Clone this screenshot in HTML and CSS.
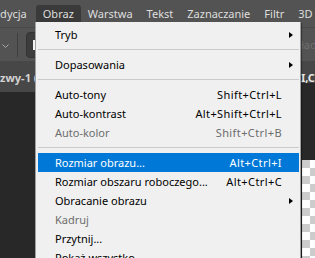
FILE: index.html
```html
<!DOCTYPE html>
<html lang="pl">
<head>
  <meta charset="UTF-8">
  <meta name="viewport" content="width=device-width, initial-scale=1.0">
  <title>Obraz</title>
  <link rel="stylesheet" href="styles.css">
</head>
<body>

<div class="app">
  <!-- Menu bar -->
  <nav class="menubar">
    <span class="menubar-item first">Edycja</span>
    <span class="menubar-item open">Obraz</span>
    <span class="menubar-item">Warstwa</span>
    <span class="menubar-item">Tekst</span>
    <span class="menubar-item">Zaznaczanie</span>
    <span class="menubar-item">Filtr</span>
    <span class="menubar-item">3D</span>
  </nav>

  <!-- Options bar -->
  <div class="toolbar">
    <svg class="chevron" width="7" height="5" viewBox="0 0 7 5"><path d="M0.5 0.5L3.5 3.5L6.5 0.5" fill="none" stroke="#a8a8a8" stroke-width="1"/></svg>
    <span class="toolbar-sep"></span>
    <span class="tool-box"><span class="tool-swatch"></span></span>
    <span class="toolbar-text">ład</span>
  </div>

  <!-- Document tabs -->
  <div class="tabbar">
    <div class="tab">zwy-1 (RGB/8)</div>
    <div class="tab-rest"><span class="tab-text">I,C</span></div>
  </div>

  <div class="workspace">
    <div class="doc"></div>
  </div>

  <!-- Open menu -->
  <div class="menu">
    <div class="menu-row"><span>Tryb</span><span></span><span class="arrow"></span></div>
    <div class="menu-sep"></div>
    <div class="menu-row"><span>Dopasowania</span><span></span><span class="arrow"></span></div>
    <div class="menu-sep"></div>
    <div class="menu-row"><span>Auto-tony</span><span class="shortcut">Shift+Ctrl+L</span><span></span></div>
    <div class="menu-row"><span>Auto-kontrast</span><span class="shortcut">Alt+Shift+Ctrl+L</span><span></span></div>
    <div class="menu-row disabled"><span>Auto-kolor</span><span class="shortcut">Shift+Ctrl+B</span><span></span></div>
    <div class="menu-sep"></div>
    <div class="menu-row active"><span>Rozmiar obrazu...</span><span class="shortcut">Alt+Ctrl+I</span><span></span></div>
    <div class="menu-row"><span>Rozmiar obszaru roboczego...</span><span class="shortcut">Alt+Ctrl+C</span><span></span></div>
    <div class="menu-row"><span>Obracanie obrazu</span><span></span><span class="arrow"></span></div>
    <div class="menu-row disabled"><span>Kadruj</span><span></span><span></span></div>
    <div class="menu-row"><span>Przytnij...</span><span></span><span></span></div>
    <div class="menu-row"><span>Pokaż wszystko</span><span></span><span></span></div>
  </div>
</div>

</body>
</html>
```

FILE: styles.css
```css
body {
  margin: 0;
  padding: 0;
  background: #282828;
  font-family: 'Noto Sans', sans-serif;
  font-size: 11px;
  overflow: hidden;
}
.app {
  position: relative;
  width: 315px;
  height: 258px;
  overflow: hidden;
}

/* Menu bar */
.menubar {
  display: flex;
  height: 27px;
  background: #535353;
  border-bottom: 1px solid #4a4a4a;
  white-space: nowrap;
}
.menubar-item {
  margin-top: 5px;
  height: 17px;
  line-height: 17px;
  padding: 0 7px;
  color: #dedede;
  box-sizing: border-box;
}
.menubar-item.first {
  margin-left: -13px;
  padding-right: 9px;
}
.menubar-item.open {
  background: #3a3a3a;
  border-radius: 3px 3px 0 0;
}

/* Options bar */
.toolbar {
  display: flex;
  align-items: center;
  height: 33px;
  background: #535353;
}
.chevron {
  margin-left: 2px;
  margin-top: 3px;
}
.toolbar-sep {
  width: 1px;
  height: 24px;
  margin-left: 8px;
  background: #3e3e3e;
}
.tool-box {
  display: flex;
  align-items: center;
  width: 22px;
  height: 26px;
  margin-left: 8px;
  border-radius: 4px;
  background: #3c3c3c;
  box-sizing: border-box;
  border: 1px solid #333;
}
.tool-swatch {
  width: 8px;
  height: 10px;
  margin-left: 6px;
  background: #f4f4f4;
}
.toolbar-text {
  margin-left: auto;
  margin-right: -6px;
  width: 20px;
  color: #6f6f6f;
}

/* Tabs */
.tabbar {
  display: flex;
  align-items: flex-start;
  height: 31px;
}
.tab {
  width: 35px;
  height: 31px;
  line-height: 34px;
  background: #474747;
  color: #d2d2d2;
  font-weight: 700;
  white-space: nowrap;
  overflow: hidden;
}
.tab-rest {
  flex: 1;
  height: 22px;
  line-height: 34px;
  background: #474747;
  padding-left: 266px;
  white-space: nowrap;
  overflow: hidden;
}
.tab-text {
  color: #e8e8e8;
  font-weight: 700;
}

/* Workspace */
.workspace {
  display: flex;
  justify-content: flex-end;
  height: 167px;
}
.doc {
  width: 13px;
  margin-top: 68px;
  background: repeating-conic-gradient(#ffffff 0 25%, #cccccc 0 50%) 0 0 / 16px 16px;
}

/* Dropdown */
.menu {
  position: absolute;
  left: 35px;
  top: 22px;
  width: 266px;
  height: 250px;
  padding-top: 3px;
  box-sizing: border-box;
  background: #f0f0f0;
  border: 1px solid #a0a0a0;
  border-top: none;
  box-shadow: 1px 1px 1px rgba(0, 0, 0, 0.35);
  color: #000;
}
.menu-row {
  display: grid;
  grid-template-columns: 1fr auto 17px;
  align-items: center;
  height: 19px;
  line-height: 19px;
  margin: 0 1px 0 2px;
  padding-left: 17px;
  white-space: nowrap;
}
.menu-row.disabled {
  color: #6d6d6d;
}
.menu-row.active {
  background: #0078d7;
  color: #fff;
}
.shortcut {
  letter-spacing: 0.4px;
}
.arrow {
  width: 0;
  height: 0;
  margin-left: 7px;
  border-left: 4px solid #000;
  border-top: 3.5px solid transparent;
  border-bottom: 3.5px solid transparent;
}
.menu-sep {
  height: 1px;
  margin: 5px 1px 5px 2px;
  background: #cacaca;
}
```
